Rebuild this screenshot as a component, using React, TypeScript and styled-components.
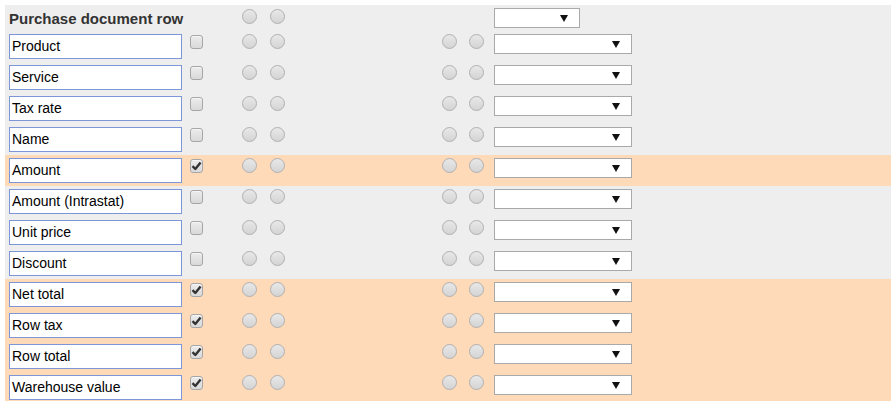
import React from 'react';
import styled, { createGlobalStyle } from 'styled-components';

const GlobalStyle = createGlobalStyle`
  html, body {
    margin: 0;
    padding: 0;
    background: #ffffff;
    font-family: "Liberation Sans", Arial, sans-serif;
    overflow: hidden;
  }
`;

/*** LAYOUT ***/
const Page = styled.div`
  padding: 5px 0 0 5px;
`;

const Table = styled.div`
  display: flex;
  flex-direction: column;
  background-color: #eeeeee;
`;

const Row = styled.div<{ $hl?: boolean; $head?: boolean }>`
  display: grid;
  grid-template-columns: 181px 52px 28px 172px 27px 25px 1fr;
  align-items: start;
  height: ${(p) => (p.$head ? '26px' : '31px')};
  box-sizing: border-box;
  padding: 3px 0 0 4px;
  background-color: ${(p) => (p.$hl ? '#ffdab9' : 'transparent')};
`;

const Title = styled.div`
  grid-column: 1 / 3;
  font-weight: bold;
  font-size: 15px;
  color: #333333;
  line-height: 17px;
  padding-top: 2px;
`;

const Spacer = styled.div`
  grid-column: 5 / 7;
`;

/*** CONTROLS ***/
const TextBox = styled.div`
  width: 173px;
  height: 25px;
  box-sizing: border-box;
  border: 1px solid #7d96d8;
  background: #ffffff;
  font-size: 14px;
  color: #000000;
  line-height: 23px;
  padding-left: 2px;
  white-space: nowrap;
  overflow: hidden;
`;

const Check = styled.div<{ $on?: boolean }>`
  width: 13px;
  height: 14px;
  margin-top: 1px;
  box-sizing: border-box;
  border: 1px solid #a6a6a6;
  border-radius: 3px;
  background: linear-gradient(#ececec, #d9d9d9);
  box-shadow: inset 0 1px 0 #f6f6f6;
  display: flex;
  align-items: center;
  justify-content: center;
  svg {
    display: ${(p) => (p.$on ? 'block' : 'none')};
  }
`;

const Radio = styled.div<{ $head?: boolean }>`
  width: 15px;
  height: 15px;
  margin-top: ${(p) => (p.$head ? '1px' : '0')};
  box-sizing: border-box;
  border: 1px solid #b0b0b0;
  border-radius: 50%;
  background: linear-gradient(#e8e8e8, #d4d4d4);
`;

const Select = styled.div<{ $w: number }>`
  width: ${(p) => p.$w}px;
  height: 20px;
  box-sizing: border-box;
  border: 1px solid #a9a9a9;
  background: #ffffff;
  position: relative;
  &::after {
    content: "";
    position: absolute;
    right: 11px;
    top: 6px;
    border-left: 4px solid transparent;
    border-right: 4px solid transparent;
    border-top: 7px solid #111111;
  }
`;

const Mark = () => (
  <svg width="11" height="10" viewBox="0 0 11 10">
    <path d="M1.5 5.2 L4.3 8 L9.6 1.6" fill="none" stroke="#333" strokeWidth="2.4" strokeLinejoin="round" />
  </svg>
);

const rows: { label: string; on: boolean }[] = [
  { label: 'Product', on: false },
  { label: 'Service', on: false },
  { label: 'Tax rate', on: false },
  { label: 'Name', on: false },
  { label: 'Amount', on: true },
  { label: 'Amount (Intrastat)', on: false },
  { label: 'Unit price', on: false },
  { label: 'Discount', on: false },
  { label: 'Net total', on: true },
  { label: 'Row tax', on: true },
  { label: 'Row total', on: true },
  { label: 'Warehouse value', on: true },
];

export default function App() {
  return (
    <Page>
      <GlobalStyle />
      <Table>
        <Row $head>
          <Title>Purchase document row</Title>
          <Radio $head />
          <Radio $head />
          <Spacer />
          <Select $w={86} />
        </Row>
        {rows.map((r) => (
          <Row key={r.label} $hl={r.on}>
            <TextBox>{r.label}</TextBox>
            <Check $on={r.on}>
              <Mark />
            </Check>
            <Radio />
            <Radio />
            <Radio />
            <Radio />
            <Select $w={138} />
          </Row>
        ))}
      </Table>
    </Page>
  );
}
